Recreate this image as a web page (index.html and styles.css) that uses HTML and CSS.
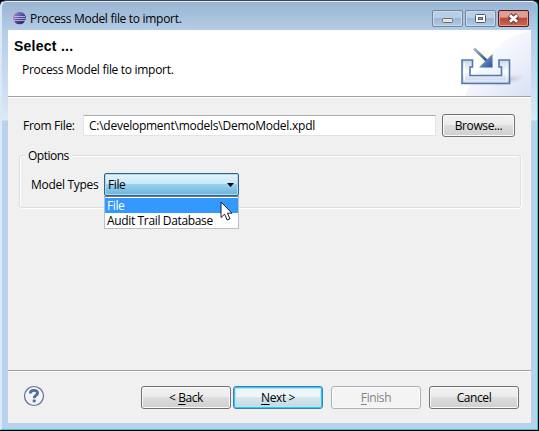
FILE: index.html
```html
<!DOCTYPE html>
<html lang="en">
<head>
<meta charset="utf-8">
<title>Process Model file to import.</title>
<link rel="stylesheet" href="styles.css">
</head>
<body>
<div class="window">
  <div class="titlebar">
    <svg class="logo" width="14" height="14" viewBox="0 0 14 14">
      <defs><linearGradient id="orb" x1="0" y1="0" x2="1" y2="1"><stop offset="0" stop-color="#a9a0d8"/><stop offset=".5" stop-color="#514b99"/><stop offset="1" stop-color="#211951"/></linearGradient></defs>
      <circle cx="6" cy="7" r="6" fill="#e3b5cc"/>
      <circle cx="7.5" cy="7" r="6.3" fill="url(#orb)"/>
      <path d="M2 5.5H13M1.8 7.5H13.4M2 9.5H13" stroke="#c9c8ee" stroke-width=".8"/>
    </svg>
    <span class="caption">Process Model file to import.</span>
    <div class="controls">
      <div class="control"><svg width="29" height="15"><rect x="9.5" y="7.5" width="10" height="4" rx="1" fill="#e8e4dc" stroke="#686c78"/></svg></div>
      <div class="control"><svg width="29" height="15"><rect x="9.5" y="3.5" width="10" height="8" rx="1" fill="#fff" stroke="#53586d"/><rect x="12.5" y="6.5" width="4" height="2" fill="#91a9c6" stroke="#53586d"/></svg></div>
      <div class="control close"><svg width="29" height="15"><path d="M10.5 4L18.5 11M18.5 4L10.5 11" stroke="#623e49" stroke-width="5"/><path d="M10.9 4.3L18.1 10.7M18.1 4.3L10.9 10.7" stroke="#fff" stroke-width="2.7"/></svg></div>
    </div>
  </div>
  <div class="client">
    <header class="header">
      <div class="heading">
        <h1>Select ...</h1>
        <p>Process Model file to import.</p>
      </div>
      <svg class="banner" width="83" height="66" viewBox="448 30 83 66">
        <defs>
          <linearGradient id="sky" x1="0" y1="0" x2="1" y2="1"><stop offset=".2" stop-color="#fff"/><stop offset="1" stop-color="#dbe3f6"/></linearGradient>
          <linearGradient id="sky2" x1="0" y1="0" x2="1" y2="1"><stop offset="0" stop-color="#fff"/><stop offset="1" stop-color="#d7e0f4"/></linearGradient>
          <linearGradient id="tray" x1="0" y1="0" x2="0" y2="1"><stop offset="0" stop-color="#c9d7e9"/><stop offset=".5" stop-color="#fafcff"/><stop offset="1" stop-color="#c1cee4"/></linearGradient>
          <linearGradient id="arrow" x1="0" y1="0" x2="1" y2="1"><stop offset="0" stop-color="#9cb9d6"/><stop offset="1" stop-color="#255397"/></linearGradient>
          <radialGradient id="shade"><stop offset="0" stop-color="#bba6b5" stop-opacity=".75"/><stop offset="1" stop-color="#d8cfdd" stop-opacity="0"/></radialGradient>
        </defs>
        <path d="M465 96Q490 37 531 31V96Z" fill="url(#sky)"/>
        <path d="M482 96Q496 58 531 51V96Z" fill="url(#sky2)" opacity=".6"/>
        <ellipse cx="508" cy="80" rx="19" ry="5" fill="url(#shade)" transform="rotate(-12 508 80)"/>
        <circle cx="485" cy="58" r="8" fill="#fffbea"/>
        <path d="M462 60H472.500V67H470V75.500H501.500V67H499V60H509.500V83.500H462Z" fill="url(#tray)" stroke="#5478ac" stroke-width="1.600"/>
        <path d="M464.500 62.500V81H507V62.500" fill="none" stroke="#fff" opacity=".7"/>
        <path d="M474 48.500L487 61" stroke="url(#arrow)" stroke-width="2.800"/>
        <path d="M492.500 54V67.500H479Z" fill="url(#arrow)"/>
      </svg>
    </header>
    <main class="body">
      <div class="filerow">
        <label class="filelabel">From File:</label>
        <div class="field">C:\development\models\DemoModel.xpdl</div>
        <div class="button browse">Browse...</div>
      </div>
      <section class="group">
        <div class="legend">Options</div>
        <div class="typerow">
          <label class="typelabel">Model Types</label>
          <div class="combo">
            <span>File</span><svg width="7" height="4"><path d="M0 0H7L3.500 4Z" fill="#000"/></svg>
            <div class="list"><div class="item selected">File</div><div class="item database">Audit Trail Database</div></div>
          </div>
        </div>
      </section>
    </main>
    <footer class="footer">
      <svg class="help" width="22" height="22" viewBox="0 0 22 22"><circle cx="11" cy="11" r="9.500" fill="#f1f4f8" stroke="#60708f" stroke-width="1.200"/><path d="M7.300 8.400C7.300 4.400 14.600 4.400 14.600 8C14.600 10.600 11.200 10.300 11.200 13.200" fill="none" stroke="#526b96" stroke-width="2.800"/><rect x="9.800" y="14.600" width="2.800" height="2.700" fill="#526b96"/></svg>
      <div class="button">&lt; <u>B</u>ack</div>
      <div class="button next"><u>N</u>ext &gt;</div>
      <div class="button finish"><u>F</u>inish</div>
      <div class="button cancel">Cancel</div>
    </footer>
  </div>
</div>
<svg class="cursor" width="14" height="21" viewBox="0 0 14 21"><path d="M1 1V16.500L4.600 13.200L7.200 19L10 17.800L7.400 12.200H12Z" fill="#fff" stroke="#1c1c30"/></svg>
</body>
</html>
```
FILE: styles.css
```css
* { box-sizing: border-box; }
body {
  margin: 0;
  width: 539px;
  height: 431px;
  overflow: hidden;
  background: #000;
  font: 12px/16px "Open Sans", "Noto Sans", sans-serif;
  letter-spacing: -0.4px;
  color: #000;
}
.window {
  width: 538px;
  height: 430px;
  padding: 0 6px 6px;
  border: 1px solid #35c5da;
  border-left-width: 2px;
  border-top-color: #3c4656;
  border-left-color: #d9e9f8;
  border-radius: 6px 6px 0 0;
  box-shadow: inset 0 1px #e5eff9;
  background: linear-gradient(#98b4d2 0, #b5cde6 30px, #d6e4f4 108px, #dce9f6 119px, #b9d1ea 120px, #b9d1ea 100%);
}
.titlebar { height: 29px; display: flex; align-items: flex-start; padding: 9px 2px 0 4px; }
.logo { margin-top: 1px; }
.caption { margin-left: 4px; letter-spacing: -0.3px; padding-top: 1px; }
.controls { margin-left: auto; display: flex; gap: 2px; }
.control {
  width: 31px; height: 17px;
  border: 1px solid #6f86a4; border-radius: 2px;
  box-shadow: inset 0 0 0 1px #c9dbed;
  background: linear-gradient(#b9cfe6 45%, #9db8d4 50%, #b1cae3);
}
.control svg { display: block; }
.close { border-color: #541a26; background: linear-gradient(#dda092 40%, #bd4835 50%, #c86c51); box-shadow: inset 0 0 0 1px #dd9c8e; }
.client { width: 523px; height: 393px; display: flex; flex-direction: column; background: #f0f0f0; }
.header { height: 68px; flex: none; display: flex; justify-content: space-between; background: #fff; border-bottom: 1px solid #fff; box-shadow: inset 0 -1px #a0a0a0; }
.heading { padding: 8px 0 0 6px; }
.heading h1 { margin: 0; font: bold 14px/17px "Liberation Sans", sans-serif; letter-spacing: 0.25px; }
.heading p { margin: 7px 0 0 8px; letter-spacing: -0.3px; }
.banner { display: block; }
.body { flex: 1; padding: 16px 11px 0 11px; }
.filerow { display: flex; align-items: center; height: 23px; padding-left: 4px; }
.filelabel { width: 60px; white-space: nowrap; letter-spacing: -0.3px; }
.field { width: 353px; height: 21px; padding: 2px 5px; background: #fff; border: 1px solid #e2e3ea; border-top-color: #abadb3; border-radius: 1px; letter-spacing: -0.25px; }
.button {
  width: 90px; height: 23px; padding-top: 3px;
  border: 1px solid #707070; border-radius: 3px;
  box-shadow: inset 0 0 0 1px #fafafa;
  background: linear-gradient(#f2f2f2 0, #ebebeb 49%, #dddddd 50%, #cfcfcf);
  text-align: center;
}
.button u { text-underline-offset: 2px; text-decoration-thickness: 1px; }
.browse { width: 73px; margin-left: 6px; }
.group { width: 502px; height: 53px; margin-top: 18px; border: 1px solid #d5dfe5; border-radius: 3px; box-shadow: 1px 1px #fff, inset 1px 1px #fff; }
.legend { width: 47px; height: 16px; margin: -8px 0 0 5px; padding-left: 3px; background: #f0f0f0; letter-spacing: -0.5px; }
.typerow { display: flex; align-items: center; height: 23px; margin-top: 9px; padding-left: 11px; }
.typelabel { width: 73px; white-space: nowrap; letter-spacing: -0.3px; }
.combo {
  position: relative; width: 135px; height: 23px;
  display: flex; align-items: center; justify-content: space-between;
  padding: 0 4px 0 3px;
  border: 1px solid #2c628b; border-radius: 2px;
  box-shadow: inset 0 0 0 1px #b3d8e9;
  background: linear-gradient(#e3f4fc 0, #c5e8f7 49%, #98d1ef 50%, #68b3db);
}
.list { position: absolute; top: 22px; left: -1px; width: 135px; height: 33px; padding-top: 1px; background: #fff; border: 1px solid #b9bfcd; border-top-color: #6c7786; }
.item { height: 15px; padding-left: 2px; line-height: 15px; white-space: nowrap; }
.selected { color: #fff; background: #3399ff; }
.database { letter-spacing: -0.35px; }
.footer { display: flex; height: 53px; border-top: 1px solid #a0a0a0; box-shadow: inset 0 1px #fff; padding: 15px 12px 0 15px; }
.help { margin-right: 96px; margin-top: -1px; }
.next { margin-left: 2px; border-color: #3c7fb1; box-shadow: inset 0 0 0 1px #36c4ef, inset 0 0 0 2px #b2e9fa; background: linear-gradient(#eff4f6 49%, #d6e7ee 50%, #bfd8e2); }
.finish { margin-left: 8px; border-color: #adb2b5; background: #f4f4f4; color: #838383; }
.cancel { margin-left: 8px; }
.cursor { position: absolute; left: 220px; top: 201px; }
```
